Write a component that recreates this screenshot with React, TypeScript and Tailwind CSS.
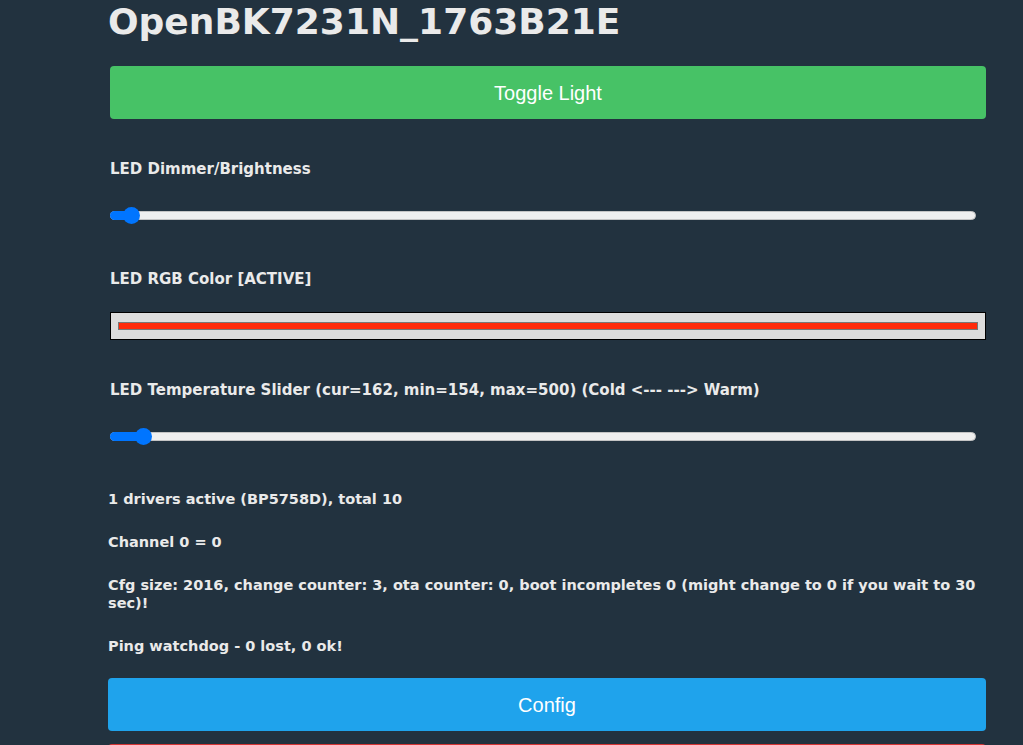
const labelFont = "font-['DejaVu_Sans',sans-serif] font-bold";

function Slider({ percent }: { percent: number }) {
  return (
    <div className="relative ml-[2px] w-[866px] h-[17px] flex items-center">
      <div className="w-full h-[9px] rounded-full bg-[#efefef] border border-[#c4c4c4]" />
      <div
        className="absolute left-0 h-[9px] rounded-l-full bg-[#0075ff]"
        style={{ width: `${percent}%` }}
      />
      <div
        className="absolute top-0 w-[17px] h-[17px] -ml-[8px] rounded-full bg-[#0075ff]"
        style={{ left: `${percent}%` }}
      />
    </div>
  );
}

const info = [
  "1 drivers active (BP5758D), total 10",
  "Channel 0 = 0",
  "Cfg size: 2016, change counter: 3, ota counter: 0, boot incompletes 0 (might change to 0 if you wait to 30 sec)!",
  "Ping watchdog - 0 lost, 0 ok!",
];

export default function App() {
  return (
    <div className="min-h-screen bg-[#22323f] text-[#eaeaea] overflow-hidden">
      <div className="w-[878px] ml-[108px]">
        <h1 className="font-['DejaVu_Sans',sans-serif] font-bold text-[36px] leading-[40px] pt-[2px]">
          OpenBK7231N_1763B21E
        </h1>

        <button className="mt-[24px] ml-[2px] w-[876px] h-[53px] rounded-[4px] bg-[#47c266] text-white text-[20px] font-['Liberation_Sans',sans-serif]">
          Toggle Light
        </button>

        <div className={`mt-[41px] ml-[2px] text-[15px] leading-[18px] ${labelFont}`}>
          LED Dimmer/Brightness
        </div>
        <div className="mt-[29px]">
          <Slider percent={2.4} />
        </div>

        <div className={`mt-[46px] ml-[2px] text-[15px] leading-[18px] ${labelFont}`}>
          LED RGB Color [ACTIVE]
        </div>
        <div className="mt-[24px] ml-[2px] w-[876px] h-[28px] border border-black bg-[#dddddd] px-[7px] flex items-center">
          <div className="w-full h-[8px] bg-[#ff2a0a] border border-[#777777]" />
        </div>

        <div className={`mt-[41px] ml-[2px] text-[15px] leading-[18px] ${labelFont}`}>
          LED Temperature Slider (cur=162, min=154, max=500) (Cold &lt;--- ---&gt; Warm)
        </div>
        <div className="mt-[29px]">
          <Slider percent={3.8} />
        </div>

        <div className={`mt-[45px] flex flex-col gap-[25px] text-[14.5px] leading-[18px] ${labelFont}`}>
          {info.map((line) => (
            <p key={line}>{line}</p>
          ))}
        </div>

        <button className="mt-[23px] w-[878px] h-[53px] rounded-[4px] bg-[#1fa3ec] text-white text-[20px] font-['Liberation_Sans',sans-serif]">
          Config
        </button>
        <button className="mt-[13px] w-[878px] h-[53px] rounded-[4px] bg-[#d43535] text-white text-[20px] font-['Liberation_Sans',sans-serif]">
          Restart
        </button>
      </div>
    </div>
  );
}
